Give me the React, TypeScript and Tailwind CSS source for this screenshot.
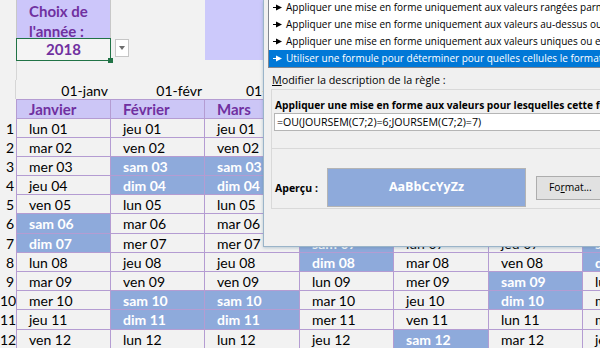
import clsx from "clsx";

const MONTHS = ["Janvier", "Février", "Mars", "Avril", "Mai", "Juin", "Juillet"];
const FIRSTS = ["01-janv", "01-févr", "01-mars", "01-avr", "01-mai", "01-juin", "01-juil"];
const DAYS = ["dim", "lun", "mar", "mer", "jeu", "ven", "sam"];
const COL_W = ["w-[95px]", "w-[94px]", "w-[95px]", "w-[94px]", "w-[95px]", "w-[94px]", "w-[95px]"];

function dayLabel(month: number, day: number) {
  const d = new Date(2018, month, day);
  const wd = d.getDay();
  return { text: `${DAYS[wd]} ${String(day).padStart(2, "0")}`, weekend: wd === 0 || wd === 6 };
}

function DayRow({ n }: { n: number }) {
  return (
    <div className="flex h-[19.2px]">
      <div className="w-[16px] shrink-0 pr-[2px] pt-[1px] text-right leading-[18px]">{n}</div>
      {MONTHS.map((_, m) => {
        const { text, weekend } = dayLabel(m, n);
        return (
          <div
            key={m}
            className={clsx(
              COL_W[m],
              "shrink-0 border-b border-r border-[#b49cd2] pl-[12px] pt-[1px] leading-[18px]",
              m === 0 && "border-l",
              weekend ? "bg-[#8eaadb] font-bold text-white" : "text-black"
            )}
          >
            {text}
          </div>
        );
      })}
    </div>
  );
}

function Arrow() {
  return (
    <svg width="9" height="7" viewBox="0 0 9 7" className="shrink-0">
      <rect x="0" y="3" width="4" height="1" fill="currentColor" />
      <path d="M3 0.5 L9 3.5 L3 6.5 Z" fill="currentColor" />
    </svg>
  );
}

function Sheet() {
  return (
    <div className="flex flex-col font-['Lato',sans-serif] text-[14px] text-black">
      {/* choix de l'annee */}
      <div className="flex h-[38px]">
        <div className="w-[16px] shrink-0" />
        <div className="w-[95px] shrink-0 border-l border-r border-[#c8c8c8] bg-[#ccc6fa] pl-[12px] pt-[1px] text-[15px] font-bold leading-[20px] text-[#7030a0]">
          Choix de
          <br />
          l'année :
        </div>
        <div className="w-[94px] shrink-0" />
        <div className="w-[58px] shrink-0 bg-[#ccc9fb]" />
      </div>
      <div className="flex h-[23px]">
        <div className="w-[16px] shrink-0" />
        <div className="relative w-[95px] shrink-0 border-[1.5px] border-[#217346] bg-[#f4f4f4] pt-[1px] text-center text-[15px] font-bold leading-[19px] text-[#7030a0]">
          2018
          <div className="absolute -bottom-[3px] -right-[3px] h-[5px] w-[5px] bg-[#217346]" />
        </div>
        <div className="w-[94px] shrink-0 pl-[4px] pt-[1px]">
          <div className="flex h-[18px] w-[14px] items-center justify-center border border-[#c6c6c6] bg-white">
            <div className="h-0 w-0 border-x-[3.5px] border-t-[4px] border-x-transparent border-t-[#6d6d6d]" />
          </div>
        </div>
        <div className="h-[22px] w-[58px] shrink-0 bg-[#ccc9fb]" />
      </div>
      <div className="flex h-[19px]">
        <div className="w-[16px] shrink-0" />
        <div className="border-l border-[#d6d6d6]" />
      </div>
      <div className="flex h-[19px]">
        <div className="w-[16px] shrink-0 border-r border-[#d6d6d6]" />
        {FIRSTS.map((f, m) => (
          <div key={m} className={clsx(COL_W[m], "shrink-0 pr-[3px] pt-[2px] text-right leading-[18px]")}>
            {f}
          </div>
        ))}
      </div>
      {/* month header */}
      <div className="flex h-[19.5px]">
        <div className="w-[16px] shrink-0" />
        {MONTHS.map((name, m) => (
          <div
            key={m}
            className={clsx(
              COL_W[m],
              "shrink-0 border-b border-r border-t border-[#b49cd2] bg-[#ccc6f6] pl-[12px] text-[15px] font-bold leading-[18px] text-[#7030a0]",
              m === 0 && "border-l"
            )}
          >
            {name}
          </div>
        ))}
      </div>
      {Array.from({ length: 12 }, (_, i) => (
        <DayRow key={i} n={i + 1} />
      ))}
    </div>
  );
}

function Dialog() {
  const items = [
    "Appliquer une mise en forme uniquement aux valeurs rangées parmi les premières ou les dernières valeurs",
    "Appliquer une mise en forme uniquement aux valeurs au-dessus ou en dessous de la moyenne",
    "Appliquer une mise en forme uniquement aux valeurs uniques ou en double",
    "Utiliser une formule pour déterminer pour quelles cellules le format sera appliqué",
  ];
  return (
    <div className="absolute left-[263px] top-0 h-[247px] w-[337px] overflow-hidden border-b border-l border-[#9ab4c9] bg-[#f0f0f0] font-['Open_Sans',sans-serif] text-[11px] text-black shadow-[0_1px_3px_rgba(80,120,150,0.35)]">
      <div className="ml-[4px] -mt-[1px] flex flex-col border-b border-l border-[#828790] bg-white text-[10px]">
        {items.map((t, i) => (
          <div
            key={i}
            className={clsx(
              "flex h-[17px] items-center gap-[4px] whitespace-nowrap pl-[4px]",
              i === 3 ? "bg-[#0078d7] text-white" : "text-black"
            )}
          >
            <Arrow />
            <span>{t}</span>
          </div>
        ))}
      </div>
      <div className="ml-[8px] mt-[4px] h-[16px] text-[10.8px] leading-[16px]">
        <span className="underline">M</span>odifier la description de la règle :
      </div>
      <div className="ml-[7px] mt-[1px] border-b border-l border-t border-[#d9d9d9] pb-[1px]">
        <div className="ml-[3px] mt-[7px] h-[16px] whitespace-nowrap text-[10.2px] font-bold leading-[16px]">
          Appliquer une mise en forme aux valeurs pour lesquelles cette formule est vraie :
        </div>
        <div className="ml-[2px] h-[18px] whitespace-nowrap border border-r-0 border-[#b5b5b5] bg-white pl-[2px] text-[10.6px] leading-[16px]">
          =OU(JOURSEM(C7;2)=6;JOURSEM(C7;2)=7)
        </div>
        <div className="mt-[17px] border-t border-[#d9d9d9]" />
        <div className="mt-[19px] flex h-[39px] items-center">
          <div className="w-[55px] shrink-0 pl-[3px] pt-[2px] text-[10.5px] font-bold">Aperçu :</div>
          <div className="flex h-[39px] w-[199px] shrink-0 items-center justify-center border border-[#b4b4b4] bg-[#8eaadb] text-[12.5px] font-bold text-white">
            AaBbCcYyZz
          </div>
          <div className="ml-[10px] flex h-[24px] w-[90px] shrink-0 items-center border border-[#adadad] bg-[#e1e1e1] pl-[12px] text-[10.3px]">
            Fo<span className="underline">r</span>mat...
          </div>
        </div>
      </div>
    </div>
  );
}

export default function App() {
  return (
    <div className="relative h-[348px] w-[600px] overflow-hidden bg-[#f2f2f2]">
      <Sheet />
      <Dialog />
    </div>
  );
}
